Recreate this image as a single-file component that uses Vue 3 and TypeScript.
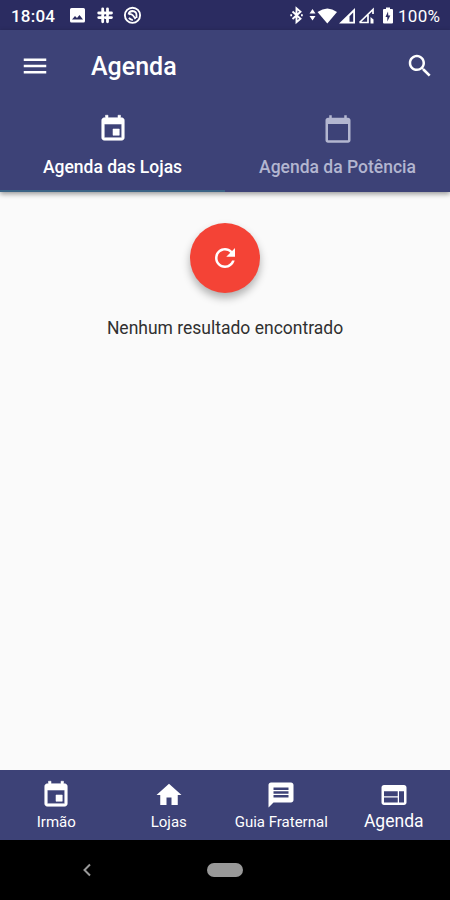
<script setup lang="ts">
import { ref } from 'vue'

interface Entry { label: string; path: string; bold?: boolean }

const eventIcon = 'M17 12h-5v5h5v-5zM16 1v2H8V1H6v2H5c-1.11 0-1.99.9-1.99 2L3 19c0 1.1.89 2 2 2h14c1.1 0 2-.9 2-2V5c0-1.1-.9-2-2-2h-1V1h-2zm3 18H5V8h14v11z'
const calendarIcon = 'M20 3h-1V1h-2v2H7V1H5v2H4c-1.1 0-2 .9-2 2v16c0 1.1.9 2 2 2h16c1.1 0 2-.9 2-2V5c0-1.1-.9-2-2-2zm0 18H4V8h16v13z'

const tabs: Entry[] = [
  { label: 'Agenda das Lojas', path: eventIcon, bold: true },
  { label: 'Agenda da Potência', path: calendarIcon },
]
const items: Entry[] = [
  { label: 'Irmão', path: eventIcon, bold: true },
  { label: 'Lojas', path: 'M10 20v-6h4v6h5v-8h3L12 3 2 12h3v8z' },
  { label: 'Guia Fraternal', path: 'M20 2H4c-1.1 0-1.99.9-1.99 2L2 22l4-4h14c1.1 0 2-.9 2-2V4c0-1.1-.9-2-2-2zM6 12v2h12v-2H6zm0-3v2h12V9H6zm0-3v2h12V6H6z' },
  { label: 'Agenda', path: 'M20 4H4c-1.1 0-1.99.9-1.99 2L2 18c0 1.1.9 2 2 2h16c1.1 0 2-.9 2-2V6c0-1.1-.9-2-2-2zm-5 14H4v-4h11v4zm0-5H4V9h11v4zm5 5h-4V9h4v9z' },
]
const activeTab = ref(0)
const activeItem = ref(3)
</script>

<template>
  <div class="screen">
    <div class="status">
      <span class="clock">18:04</span>
      <svg class="notices" width="74" height="20" viewBox="0 0 74 20" fill="#fff">
        <path fill-rule="evenodd" d="M2.500 2h12a1.500 1.500 0 0 1 1.500 1.500v11.500a1.500 1.500 0 0 1-1.500 1.500h-12A1.500 1.500 0 0 1 1 15V3.500A1.500 1.500 0 0 1 2.500 2zM3 13.500h11l-3.500-4.500-2.500 3-2-2z" />
        <path d="M33.700 3v4.200M38.500 3v4.200M29.700 7.200h4M38.500 7.200h4M33.700 16v-4.200M38.500 16v-4.200M29.700 11.800h4M38.500 11.800h4M33.700 7.200h2.300M38.500 7.200v2.300M38.500 11.800h-2.300M33.700 11.800V9.500" fill="none" stroke="#fff" stroke-width="2.800" stroke-linecap="round" transform="translate(0 -.2)" />
        <g fill="none" stroke="#fff">
          <circle cx="63.500" cy="9.300" r="7.600" stroke-width="1.900" />
          <path d="M59.500 8.500q.8-3.500 4-3.500 4 .3 4 4v3M60 8.500q3-1.500 6.500 4.500M60 11.800q1.200 2.200 3.800 2.200" stroke-width="1.800" />
        </g>
      </svg>
      <svg class="signals" width="106" height="20" viewBox="0 0 106 20" fill="#fff">
        <path d="M3.500 5.500l8 7.200-4 3.500V2.300l4 3.500-8 7.200M1.300 9.300h1.800M12 9.300h1.800" fill="none" stroke="#fff" stroke-width="1.900" />
        <path d="M20.500 7.500l3-4.500 3 4.500zM20.500 10l3 4.500 3-4.500z" />
        <path d="M28.500 6q10-7 19.500 0l-9.700 11.500z" />
        <path fill-rule="evenodd" d="M50 17.500L66 2v15.500zM60.500 15.800h3.700V6.500l-3.700 3.800z" />
        <path d="M70.500 16.500L84 3.500V8M70.500 16.500H79V9" fill="none" stroke="#fff" stroke-width="1.700" />
        <path d="M81.500 11l3 2.500v4h-3z" />
        <path fill-rule="evenodd" d="M95 3h2V1.500h4V3h2q1 0 1 1v12.500q0 1-1 1h-8q-1 0-1-1V4q0-1 1-1zM99 5.500l-2.500 5.500h1.800v4.500l3-6h-2z" />
      </svg>
      <span class="battery">100%</span>
    </div>
    <header class="header">
      <div class="toolbar">
        <svg class="icon" viewBox="0 0 24 24"><path d="M3 18h18v-2H3v2zm0-5h18v-2H3v2zm0-7v2h18V6H3z" /></svg>
        <h1 class="title">Agenda</h1>
        <svg class="icon" viewBox="0 0 24 24"><path d="M15.500 14h-.79l-.28-.27C15.410 12.590 16 11.110 16 9.500 16 5.910 13.090 3 9.500 3S3 5.910 3 9.500 5.910 16 9.500 16c1.610 0 3.090-.59 4.230-1.570l.27.28v.79l5 4.990L20.490 19l-4.990-5zm-6 0C7.010 14 5 11.990 5 9.500S7.010 5 9.500 5 14 7.010 14 9.500 11.990 14 9.500 14z" /></svg>
      </div>
      <nav class="tabs">
        <button v-for="(tab, i) in tabs" :key="tab.label" class="tab" :class="{ active: activeTab === i }" @click="activeTab = i">
          <svg class="icon" :class="{ bold: tab.bold }" viewBox="0 0 24 24"><path :d="tab.path" fill-rule="evenodd" /></svg>
          <span>{{ tab.label }}</span>
        </button>
      </nav>
    </header>
    <main class="content">
      <button class="refresh" aria-label="Atualizar">
        <svg class="icon" viewBox="0 0 24 24"><path d="M17.650 6.350C16.200 4.900 14.210 4 12 4c-4.420 0-7.990 3.580-7.990 8s3.570 8 7.990 8c3.730 0 6.840-2.550 7.730-6h-2.080c-.82 2.330-3.040 4-5.650 4-3.310 0-6-2.690-6-6s2.690-6 6-6c1.660 0 3.140.69 4.220 1.780L13 11h7V4l-2.350 2.350z" /></svg>
      </button>
      <p class="message">Nenhum resultado encontrado</p>
    </main>
    <nav class="bottom">
      <button v-for="(item, i) in items" :key="item.label" class="item" :class="{ active: activeItem === i }" @click="activeItem = i">
        <svg class="icon" :class="{ bold: item.bold }" viewBox="0 0 24 24"><path :d="item.path" :fill-rule="item.bold ? 'nonzero' : 'evenodd'" /></svg>
        <span>{{ item.label }}</span>
      </button>
    </nav>
    <div class="system">
      <svg class="back" width="10" height="14" viewBox="0 0 10 14"><path d="M8 1.500L2.500 7 8 12.500" /></svg>
      <span class="pill"></span>
      <span></span>
    </div>
  </div>
</template>

<style>
body { margin: 0; }
</style>

<style scoped>
.screen { width: 450px; height: 900px; display: flex; flex-direction: column; background: #fafafa; font-family: Roboto, sans-serif; overflow: hidden; }
button { appearance: none; border: 0; padding: 0; margin: 0; background: none; color: inherit; font: inherit; }
.icon { width: 30px; height: 30px; fill: currentColor; display: block; flex: none; }
.icon.bold { stroke: currentColor; stroke-width: .45; stroke-linejoin: round; }
.status { height: 30px; box-sizing: border-box; padding: 0 9px 0 11px; display: flex; align-items: center; background: #2b2c61; color: #fff; font-size: 17px; font-weight: 500; flex: none; }
.status span { position: relative; top: 1px; white-space: nowrap; }
.clock { width: 45px; letter-spacing: .2px; }
.notices { margin-left: 13px; margin-top: 2px; }
.signals { margin-left: auto; margin-right: 3px; margin-top: 2px; }
.battery { width: 43px; font-weight: 400; letter-spacing: .3px; }
.header { height: 162px; flex: none; background: #3d4277; color: #fff; box-shadow: 0 2px 5px rgba(0, 0, 0, .4); z-index: 1; }
.toolbar { height: 72px; padding: 0 15px 0 20px; display: flex; align-items: center; }
.title { margin: 2px auto 0 41px; font-size: 25px; font-weight: 500; line-height: 30px; }
.tabs { height: 90px; display: grid; grid-template-columns: 1fr 1fr; }
.tab { box-sizing: border-box; display: flex; flex-direction: column; align-items: center; padding-top: 12px; gap: 12px; font-size: 17.500px; font-weight: 500; line-height: 22px; color: #b3b6d0; border-bottom: 2px solid transparent; }
.tab.active { color: #fff; border-bottom-color: #3b6385; }
.content { flex: 1; display: flex; flex-direction: column; align-items: center; padding-top: 31px; }
.refresh { width: 70px; height: 70px; border-radius: 50%; background: #f44336; color: #fff; display: grid; place-items: center; box-shadow: 0 5px 8px rgba(0, 0, 0, .3); }
.message { margin: 24px 0 0; font-size: 17.500px; line-height: 22px; color: #303030; }
.bottom { height: 70px; flex: none; display: grid; grid-template-columns: repeat(4, 1fr); background: #3d4277; color: #fff; }
.item { display: flex; flex-direction: column; align-items: center; padding-top: 10px; gap: 2px; font-size: 15px; line-height: 20px; white-space: nowrap; }
.item.active { font-size: 17.500px; gap: 1px; }
.system { height: 60px; flex: none; display: grid; grid-template-columns: 1fr 36px 1fr; align-items: center; justify-items: center; background: #000; }
.back { fill: none; stroke: #999; stroke-width: 2; margin-left: -34px; }
.pill { width: 36px; height: 14px; border-radius: 7px; background: #999; }
</style>
